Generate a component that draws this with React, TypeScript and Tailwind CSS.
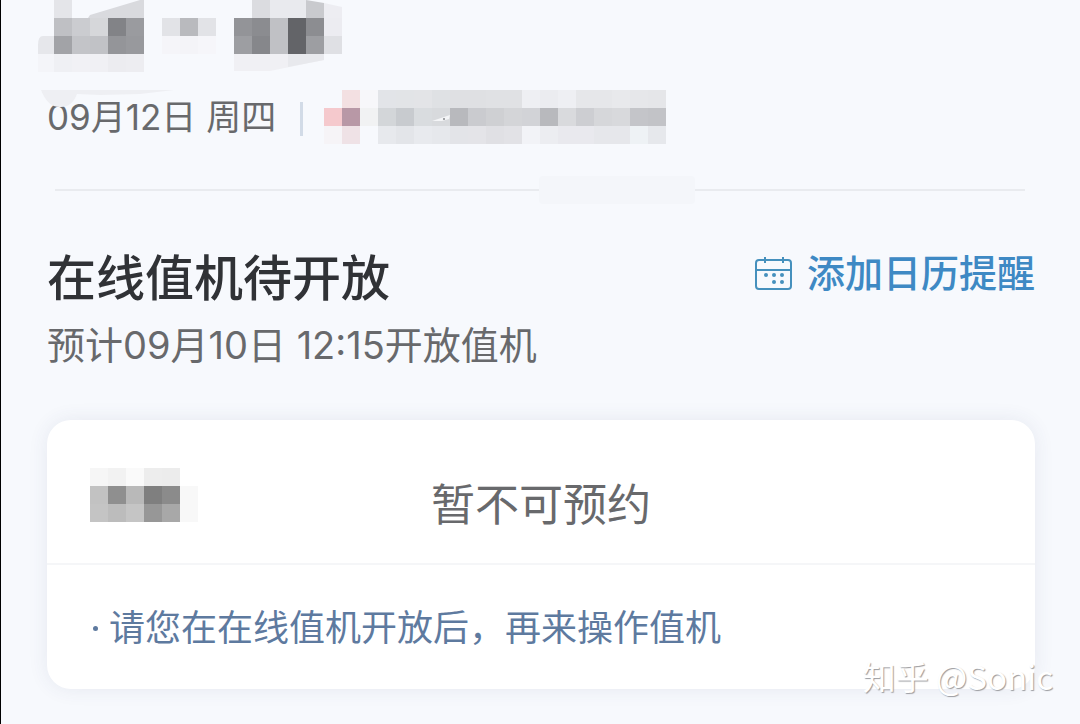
type Cell = [x: number, y: number, fill: string];

const nameCells: Cell[] = [
  [54, 0, '#e4e5e9'], [252, 0, '#dbdce0'], [270, 0, '#e9eaee'], [288, 0, '#e9eaee'],
  [54, 18, '#bfc0c4'], [72, 18, '#cbccd0'], [90, 18, '#d6d7da'], [108, 18, '#828387'], [126, 18, '#9a9b9f'],
  [162, 18, '#e2e3e7'], [180, 18, '#b9babe'], [198, 18, '#e2e3e7'],
  [234, 18, '#939498'], [252, 18, '#8b8c90'], [270, 18, '#c0c1c5'], [288, 18, '#636468'], [306, 18, '#8c8d91'], [324, 18, '#ececf1'],
  [54, 36, '#a2a3a7'], [72, 36, '#c3c4c8'], [90, 36, '#c1c2c6'], [108, 36, '#949599'], [126, 36, '#98999d'],
  [162, 36, '#f5f5f9'], [180, 36, '#f4f4f8'], [198, 36, '#f6f6fa'],
  [234, 36, '#9d9ea2'], [252, 36, '#86878b'], [270, 36, '#c0c1c5'], [288, 36, '#636468'], [306, 36, '#9d9ea2'], [324, 36, '#dfe0e4'],
  [54, 54, '#eff0f4'], [72, 54, '#f1f1f5'], [90, 54, '#f0f0f4'], [108, 54, '#ececf0'], [126, 54, '#ededf1'],
];

const flightCells: Cell[] = [
  [18, 0, '#f3e0e2'], [36, 0, '#f7f7fa'],
  [54, 0, '#e2e4e8'], [72, 0, '#e2e4e7'], [90, 0, '#e3e4e7'], [108, 0, '#dfe1e4'], [126, 0, '#dfe0e3'], [144, 0, '#dfe0e3'],
  [162, 0, '#e0e1e4'], [180, 0, '#e0e1e4'], [198, 0, '#eeeff3'], [216, 0, '#ebecf0'], [234, 0, '#eeeff3'], [252, 0, '#e6e7ea'],
  [270, 0, '#e6e7ea'], [288, 0, '#e8e9ec'], [306, 0, '#e6e7ea'], [324, 0, '#e5e6e9'],
  [0, 18, '#f5c9cd'], [18, 18, '#b898a6'], [36, 18, '#f1f2f3'],
  [54, 18, '#d3d6d9'], [72, 18, '#c8cbcf'], [90, 18, '#d9dcdf'], [108, 18, '#d8dadd'], [126, 18, '#b8b9bd'], [144, 18, '#cacbcf'],
  [162, 18, '#cfd0d3'], [180, 18, '#d4d5d8'], [198, 18, '#d2d3d7'], [216, 18, '#b8b9bd'], [234, 18, '#d9dadd'], [252, 18, '#cdced2'],
  [270, 18, '#d6d7da'], [288, 18, '#d8d9dc'], [306, 18, '#c4c5c9'], [324, 18, '#c2c3c7'],
  [0, 36, '#f6f4f7'], [18, 36, '#efe2e6'],
  [54, 36, '#e7e9ed'], [72, 36, '#e3e5e9'], [90, 36, '#e8eaee'], [108, 36, '#e6e8ec'], [126, 36, '#e3e4e8'], [144, 36, '#e4e4e8'],
  [162, 36, '#e0e0e4'], [180, 36, '#e2e2e6'], [198, 36, '#f2f3f7'], [216, 36, '#ecedf1'], [234, 36, '#e9e9ee'], [252, 36, '#e9e9ee'],
  [270, 36, '#e6e7eb'], [288, 36, '#e6e7eb'], [306, 36, '#eef2f5'], [324, 36, '#e6e8ec'],
];

const passengerCells: Cell[] = [
  [0, 0, '#f6f6f6'], [18, 0, '#f2f2f2'], [36, 0, '#fafafa'], [54, 0, '#ededed'], [72, 0, '#ececec'],
  [0, 18, '#c2c2c2'], [18, 18, '#8f8f8f'], [36, 18, '#b9b9b9'], [54, 18, '#7f7f7f'], [72, 18, '#8b8b8b'], [90, 18, '#f8f8f8'],
  [0, 36, '#c4c4c4'], [18, 36, '#bcbcbc'], [36, 36, '#c5c5c5'], [54, 36, '#979797'], [72, 36, '#a8a8a8'], [90, 36, '#f8f8f8'],
];

function Cells({ cells }: { cells: Cell[] }) {
  return (
    <g shapeRendering="crispEdges">
      {cells.map(([x, y, fill]) => (
        <rect key={`${x}-${y}`} x={x} y={y} width={18} height={18} fill={fill} />
      ))}
    </g>
  );
}

function CalendarIcon() {
  return (
    <svg width="40" height="36" viewBox="0 0 40 36" fill="none" stroke="#4590bd" strokeWidth="2" aria-hidden="true">
      <rect x="1" y="5" width="35" height="29" rx="3" />
      <path d="M1 15H36M10 2V8M28 2V8" />
      <g fill="#4590bd" stroke="none">
        <circle cx="11" cy="20" r="2" />
        <circle cx="19" cy="20" r="2" />
        <circle cx="27" cy="20" r="2" />
        <circle cx="19" cy="27" r="2" />
        <circle cx="27" cy="27" r="2" />
      </g>
    </svg>
  );
}

export default function App() {
  return (
    <div className="relative min-h-screen overflow-hidden border-l border-black bg-[#f7f9fd] font-['Inter','Noto_Sans_CJK_SC',sans-serif] text-[#68696c]">
      <header className="pl-[46px] pr-[46px]">
        {/* masked passenger / route name */}
        <svg className="relative z-10 -ml-[9px] block overflow-visible" width="304" height="90" viewBox="38 0 304 90" aria-hidden="true">
          <path d="M38 54V45Q38 36 43 36H54V54Z" fill="#e6e7eb" />
          <path d="M38 54H54V72H38Z" fill="#f4f5f9" />
          <path d="M88 18L90 15L140 0H144V18Z" fill="#d9dade" />
          <path d="M306 0L324 3V18H306Z" fill="#c9cace" />
          <path d="M324 3L342 7V18H324Z" fill="#ededf2" />
          <path d="M234 54H324V60L270 71H234Z" fill="#f0f0f4" />
          <path d="M288 54H324V60L288 67Z" fill="#e8e9ed" />
          <Cells cells={nameCells} />
          <path d="M41 90H174L140 94L100 95L77 94Q72 107 61 107Q48 108 41 90Z" fill="#eeeff3" />
        </svg>

        <div className="flex h-[54px] items-start">
          <p className="text-[35px] leading-[54px]">09月12日 周四</p>
          <span className="ml-[24px] mt-[12px] h-[34px] w-[3px] bg-[#d2dbe7]" />
          <svg className="ml-[21px] block" width="342" height="54" viewBox="0 0 342 54" aria-hidden="true">
            <Cells cells={flightCells} />
            <path d="M108 31L126 25L125 29L118 31Z" fill="#f4f5f7" />
            <circle cx="120" cy="29" r="1" fill="#85868a" />
          </svg>
        </div>

        <div className="ml-[8px] mr-[9px] mt-[32px] flex h-[28px] items-center">
          <span className="h-[2px] flex-1 bg-[#e9ebef]" />
          <span className="h-[28px] w-[156px] rounded bg-[#f4f6fa]" />
          <span className="h-[2px] w-[34%] bg-[#e9ebef]" />
        </div>
      </header>

      <main className="pl-[46px] pr-[45px] pt-[41px]">
        <div className="flex items-center justify-between">
          <h1 className="text-[49px] font-medium leading-[68px] text-[#303236]">在线值机待开放</h1>
          <button type="button" className="-mt-3 flex items-center gap-3 text-[38px] font-medium leading-[56px] text-[#3e89c4]">
            <CalendarIcon />
            添加日历提醒
          </button>
        </div>
        <p className="mt-[4px] text-[38px] leading-[56px]">预计09月10日 12:15开放值机</p>

        <section className="mt-[47px] rounded-[24px] bg-white shadow-[0_0_20px_rgba(60,70,110,0.09)]">
          <div className="relative flex h-[145px] items-center justify-center border-b-2 border-[#f5f6f8] pt-[26px]">
            <svg className="absolute left-[43px] top-[48px]" width="108" height="54" viewBox="0 0 108 54" aria-hidden="true">
              <Cells cells={passengerCells} />
            </svg>
            <p className="text-[44px] leading-[60px]">暂不可预约</p>
          </div>
          <p className="flex px-[44px] pb-[34px] pt-[36px] text-[36px] leading-[54px] text-[#5e7a9f]">
            <span className="flex w-[18px] items-center">
              <span className="ml-[2px] h-[5px] w-[5px] rounded-full bg-[#5e7a9f]" />
            </span>
            请您在在线值机开放后，再来操作值机
          </p>
        </section>
      </main>

      <p className="absolute bottom-[24px] right-[27px] font-['Noto_Sans_CJK_SC',sans-serif] text-[33px] leading-[48px] text-white [text-shadow:1px_1px_1px_#9b9ca0]">
        知乎 @Sonic
      </p>
    </div>
  );
}
